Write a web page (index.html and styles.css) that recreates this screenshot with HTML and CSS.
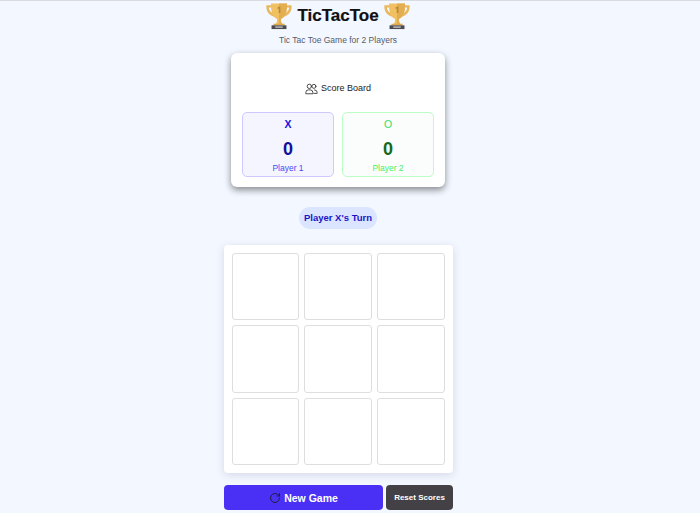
FILE: index.html
```html
<!DOCTYPE html>
<html lang="en">
<head>
<meta charset="utf-8">
<title>TicTacToe</title>
<link rel="stylesheet" href="styles.css">
</head>
<body>
<svg class="defs" width="0" height="0" aria-hidden="true">
  <symbol id="trophy" viewBox="0 0 30 30">
    <path d="M8 3.500H1.500c-.6 6.500 2.800 11 9 12.300l.9-2.500C7 12.300 4.200 9.500 4.200 6h3.800z" fill="#eab85c"/>
    <path d="M22 3.500h6.500c.6 6.500-2.800 11-9 12.300l-.9-2.500c4.400-1 7.200-3.800 7.200-7.300h-3.800z" fill="#eab85c"/>
    <path d="M6.500 1.500h17c.4 8.500-1.500 14.500-6.300 16.500-.5 2 .1 4 1.300 5.500h-7c1.200-1.500 1.800-3.500 1.300-5.500C8 16 6.100 10 6.500 1.500z" fill="#f0c062"/>
    <path d="M15 1.500h8.500c.4 8.500-1.500 14.500-6.300 16.500-.5 2 .1 4 1.300 5.500H15z" fill="#e4ae50"/>
    <path d="M13.400 6l2-1.100h1.100v6.800h-1.800V7l-1.300.6z" fill="#b98a35"/>
    <rect x="9" y="23.300" width="12" height="1.700" fill="#dea748"/>
    <rect x="7" y="25" width="16" height="4" fill="#4a4a4f"/>
    <rect x="11" y="26.200" width="8" height="1.400" fill="#c8c8cc"/>
  </symbol>
</svg>
<main class="app">
  <header class="header">
    <div class="title-row">
      <svg class="trophy"><use href="#trophy"/></svg>
      <h1 class="title">TicTacToe</h1>
      <svg class="trophy"><use href="#trophy"/></svg>
    </div>
    <p class="subtitle">Tic Tac Toe Game for 2 Players</p>
  </header>

  <section class="score-card">
    <h2 class="score-title">
      <svg class="users" viewBox="0 0 24 24" fill="none" stroke="#333" stroke-width="1.600" stroke-linecap="round" stroke-linejoin="round">
        <circle cx="8" cy="8" r="4"/>
        <path d="M1.500 21v-1.500a5 5 0 0 1 5-5h3a5 5 0 0 1 5 5V21z"/>
        <circle cx="16.500" cy="8" r="3.700"/>
        <path d="M17.500 14.500a5 5 0 0 1 5 5V21h-6"/>
      </svg>
      Score Board
    </h2>
    <div class="scores">
      <div class="score score-x">
        <div class="mark">X</div>
        <div class="points">0</div>
        <div class="player">Player 1</div>
      </div>
      <div class="score score-o">
        <div class="mark">O</div>
        <div class="points">0</div>
        <div class="player">Player 2</div>
      </div>
    </div>
  </section>

  <div class="turn">Player X's Turn</div>

  <section class="board">
    <button class="cell"></button><button class="cell"></button><button class="cell"></button>
    <button class="cell"></button><button class="cell"></button><button class="cell"></button>
    <button class="cell"></button><button class="cell"></button><button class="cell"></button>
  </section>

  <div class="actions">
    <button class="btn btn-new">
      <svg class="refresh" viewBox="0 0 24 24" fill="none" stroke="#1f1f3a" stroke-width="2" stroke-linecap="round" stroke-linejoin="round">
        <path d="M21 12a9 9 0 1 1-3-6.700L21 8"/>
        <path d="M21 3v5h-5"/>
      </svg>
      New Game
    </button>
    <button class="btn btn-reset">Reset Scores</button>
  </div>
</main>
</body>
</html>
```
FILE: styles.css
```css
* { box-sizing: border-box; }
html, body { margin: 0; height: 100%; }
body {
  background: #f3f7ff;
  border-top: 1px solid #d9dbe0;
  font-family: "Liberation Sans", Arial, sans-serif;
  color: #111;
  overflow: hidden;
}
.defs { position: absolute; }
.app {
  display: flex;
  flex-direction: column;
  align-items: center;
  width: 676px;
}
.header { display: flex; flex-direction: column; align-items: center; }
.title-row { display: flex; align-items: center; gap: 4px; height: 30px; }
.trophy { width: 28px; height: 28px; }
.title { margin: 0; font-size: 17px; font-weight: 700; line-height: 30px; -webkit-text-stroke: 0.2px #000; }
.subtitle { margin: 2px 0 0; font-size: 8.500px; line-height: 14px; color: #555b6a; height: 20px; }
.score-card {
  width: 214px;
  height: 134px;
  background: #fff;
  border-radius: 6px;
  box-shadow: 0 3px 7px rgba(0,0,0,.45);
  padding: 28px 11px 10px;
  display: flex;
  flex-direction: column;
}
.score-title {
  margin: 0;
  display: flex;
  align-items: center;
  justify-content: center;
  gap: 3px;
  height: 14px;
  font-size: 9px;
  font-weight: 400;
  color: #1a1a1a;
}
.users { width: 13px; height: 13px; }
.scores { display: grid; grid-template-columns: 92px 92px; gap: 8px; margin-top: 17px; }
.score {
  height: 65px;
  border-radius: 5px;
  border: 1px solid;
  display: flex;
  flex-direction: column;
  align-items: center;
  padding-top: 4px;
}
.score-x { background: #f4f5ff; border-color: #cdc9ff; }
.score-o { background: #fafdfb; border-color: #bbffc6; }
.mark { font-size: 10.500px; line-height: 14px; height: 14px; }
.score-x .mark { color: #1a10e0; font-weight: 700; }
.score-o .mark { color: #33e065; }
.points { font-size: 18px; font-weight: 700; line-height: 20px; margin-top: 8px; }
.score-x .points { color: #10109a; }
.score-o .points { color: #146a1a; }
.player { font-size: 8.500px; line-height: 12px; margin-top: 3px; }
.score-x .player { color: #4a48f5; }
.score-o .player { color: #4cee5a; }
.turn {
  margin-top: 20px;
  height: 22px;
  width: 78px;
  border-radius: 11px;
  background: #dbe5ff;
  color: #1a12c8;
  font-size: 9.500px;
  font-weight: 700;
  line-height: 22px;
  text-align: center;
  white-space: nowrap;
}
.board {
  margin-top: 16px;
  margin-left: 1px;
  width: 229px;
  height: 228px;
  background: #fff;
  border-radius: 4px;
  box-shadow: 0 2px 8px rgba(70,80,130,.18);
  padding: 8px 8px 8px 7.500px;
  display: grid;
  grid-template-columns: repeat(3, 1fr);
  grid-template-rows: repeat(3, 1fr);
  gap: 5.300px;
}
.cell {
  background: #fff;
  border: 1px solid #dedee0;
  border-radius: 3px;
  padding: 0;
}
.actions {
  margin-top: 12px;
  margin-left: 1px;
  display: flex;
  gap: 3px;
  width: 229px;
}
.btn {
  height: 25px;
  border: 0;
  border-radius: 4px;
  color: #fff;
  font-family: "Liberation Sans", Arial, sans-serif;
  font-weight: 700;
  display: flex;
  align-items: center;
  justify-content: center;
  padding: 0;
}
.btn-new { width: 159px; background: #4a30f5; font-size: 10.500px; gap: 3px; }
.btn-reset { width: 67px; background: #444146; font-size: 8px; }
.refresh { width: 12px; height: 12px; }
```
